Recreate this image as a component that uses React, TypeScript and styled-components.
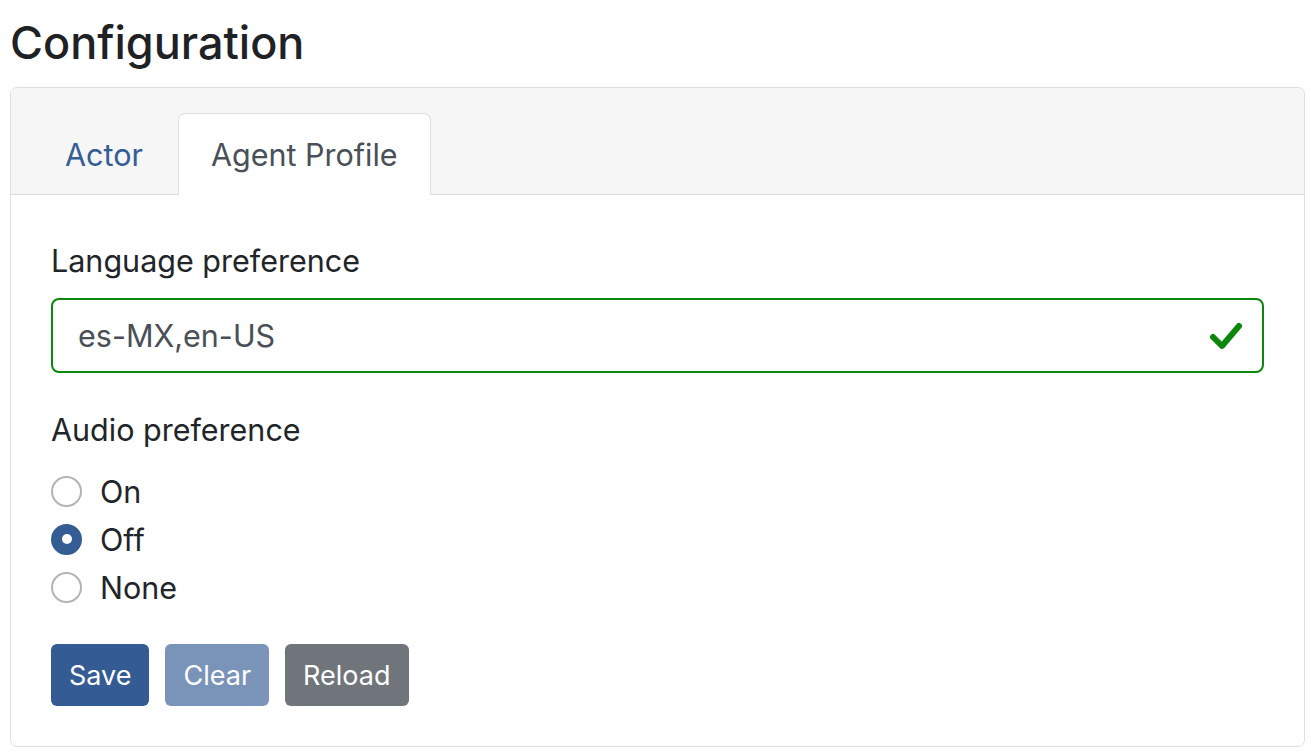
import React, { useState } from "react";
import styled, { createGlobalStyle } from "styled-components";

const Global = createGlobalStyle`
  html, body { margin: 0; padding: 0; background: #fff; }
  body {
    font-family: Inter, "Noto Sans", "Liberation Sans", sans-serif;
    color: #212529;
    -webkit-font-smoothing: antialiased;
  }
  * { box-sizing: border-box; }
`;

const Page = styled.div`
  padding: 15px 6px 0 10px;
`;

const Title = styled.h1`
  margin: 0 0 16px;
  font-size: 45px;
  line-height: 56px;
  font-weight: 500;
  color: #1f2225;
`;

const Card = styled.section`
  border: 1px solid #dfdfdf;
  border-radius: 7px;
  overflow: hidden;
  background: #fff;
`;

const CardHeader = styled.div`
  background: #f6f6f6;
  border-bottom: 1px solid #dedede;
  padding: 25px 21px 0;
`;

const Tabs = styled.div`
  display: flex;
  gap: 2px;
  margin-bottom: -1px;
`;

const Tab = styled.button<{ $active?: boolean }>`
  font: inherit;
  font-size: 30.5px;
  line-height: 46px;
  padding: 18px 32px 16px;
  border: 1px solid ${(p) => (p.$active ? "#dedede" : "transparent")};
  border-bottom-color: ${(p) => (p.$active ? "#fff" : "transparent")};
  border-radius: 7px 7px 0 0;
  background: ${(p) => (p.$active ? "#fff" : "transparent")};
  color: ${(p) => (p.$active ? "#495057" : "#345d94")};
  cursor: pointer;
`;

const CardBody = styled.div`
  padding: 43px 40px 40px;
`;

const Group = styled.div<{ $gap?: number }>`
  margin-bottom: ${(p) => p.$gap ?? 34}px;
`;

const Label = styled.label`
  display: block;
  font-size: 30.5px;
  line-height: 46px;
  margin-bottom: 14px;
  color: #212529;
`;

const InputWrap = styled.div`
  position: relative;
`;

const TextInput = styled.input`
  display: block;
  width: 100%;
  height: 75px;
  border: 2px solid #0b870b;
  border-radius: 8px;
  padding: 0 70px 0 25px;
  font: inherit;
  font-size: 30.5px;
  color: #495057;
  background: #fff;
  outline: none;
`;

const ValidIcon = styled.svg`
  position: absolute;
  right: 20px;
  top: 23px;
  width: 36px;
  height: 30px;
`;

const RadioList = styled.div`
  margin-bottom: 33px;
`;

const RadioRow = styled.label`
  display: flex;
  align-items: center;
  gap: 18px;
  height: 48px;
  font-size: 30.5px;
  color: #212529;
  cursor: pointer;
`;

const RadioCircle = styled.span<{ $checked?: boolean }>`
  width: 31px;
  height: 31px;
  border-radius: 50%;
  flex: none;
  border: 2px solid ${(p) => (p.$checked ? "#345d94" : "#b0b4b9")};
  background: ${(p) => (p.$checked ? "#345d94" : "#fff")};
  display: flex;
  align-items: center;
  justify-content: center;
  &::after {
    content: "";
    width: 10px;
    height: 10px;
    border-radius: 50%;
    background: #fff;
    display: ${(p) => (p.$checked ? "block" : "none")};
  }
`;

const Buttons = styled.div`
  display: flex;
  gap: 16px;
`;

const Button = styled.button<{ $variant: "primary" | "secondary"; $disabled?: boolean }>`
  height: 62px;
  padding: 0 18px;
  border: none;
  border-radius: 6px;
  font: inherit;
  font-size: 27px;
  color: #fff;
  background: ${(p) => (p.$variant === "primary" ? "#345b94" : "#70757b")};
  opacity: ${(p) => (p.$disabled ? 0.65 : 1)};
  cursor: ${(p) => (p.$disabled ? "default" : "pointer")};
`;

const options = ["On", "Off", "None"];

export default function App() {
  const [audio, setAudio] = useState("Off");
  const [tab, setTab] = useState("profile");
  return (
    <Page>
      <Global />
      <Title>Configuration</Title>
      <Card>
        <CardHeader>
          <Tabs>
            <Tab $active={tab === "actor"} onClick={() => setTab("actor")}>
              Actor
            </Tab>
            <Tab $active={tab === "profile"} onClick={() => setTab("profile")}>
              Agent Profile
            </Tab>
          </Tabs>
        </CardHeader>
        <CardBody>
          <Group>
            <Label htmlFor="lang">Language preference</Label>
            <InputWrap>
              <TextInput id="lang" defaultValue="es-MX,en-US" />
              <ValidIcon viewBox="0 0 36 30">
                <polyline
                  points="5,16 14,25 31,5"
                  fill="none"
                  stroke="#0b870b"
                  strokeWidth="6"
                  strokeLinecap="round"
                  strokeLinejoin="round"
                />
              </ValidIcon>
            </InputWrap>
          </Group>
          <Label as="div">Audio preference</Label>
          <RadioList>
            {options.map((o) => (
              <RadioRow key={o} onClick={() => setAudio(o)}>
                <RadioCircle $checked={audio === o} />
                {o}
              </RadioRow>
            ))}
          </RadioList>
          <Buttons>
            <Button $variant="primary">Save</Button>
            <Button $variant="primary" $disabled>
              Clear
            </Button>
            <Button $variant="secondary">Reload</Button>
          </Buttons>
        </CardBody>
      </Card>
    </Page>
  );
}
